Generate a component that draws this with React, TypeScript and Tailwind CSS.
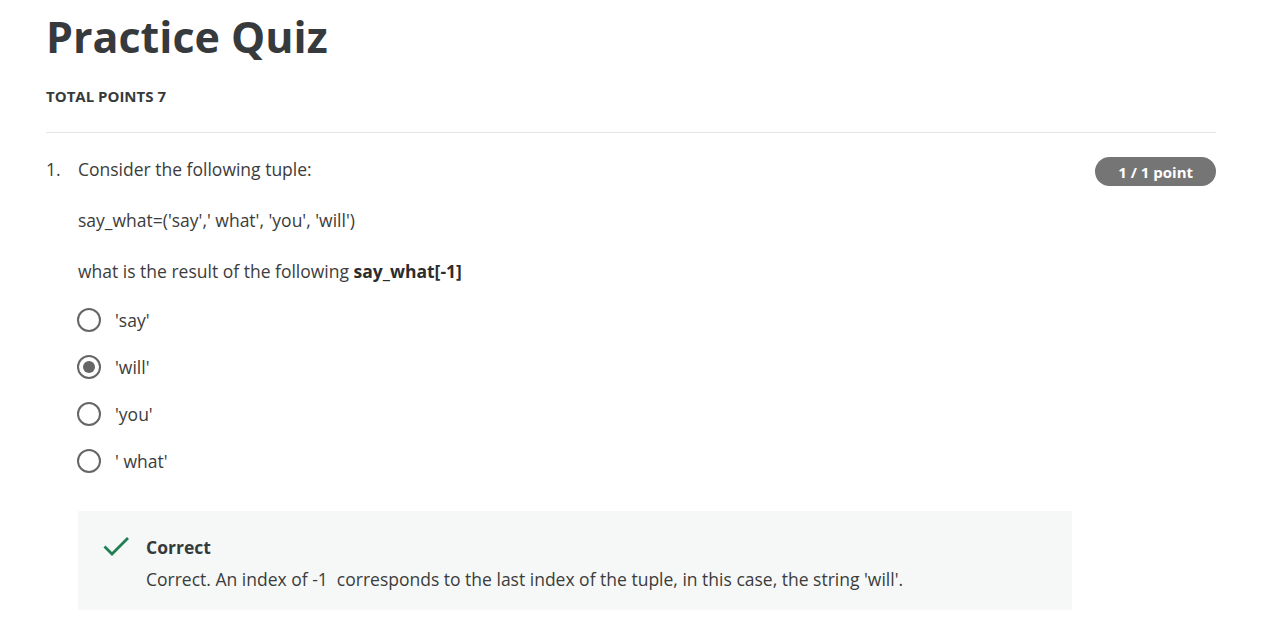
const options = ["'say'", "'will'", "'you'", "' what'"];

const Radio = ({ checked }: { checked: boolean }) => (
  <span className="ml-[-1px] flex h-6 w-6 shrink-0 items-center justify-center rounded-full border-2 border-[#666666] bg-white">
    {checked && <span className="h-3 w-3 rounded-full bg-[#666666]" />}
  </span>
);

export default function App() {
  return (
    <div
      className="min-h-[641px] bg-white px-[46px] text-[#3c3c3c]"
      style={{ fontFamily: '"Open Sans", sans-serif' }}
    >
      <h1 className="pt-[10px] text-[43px] font-bold leading-[54px] text-[#373a3c]">Practice Quiz</h1>
      <div className="mt-[22px] text-[15px] font-bold leading-5 text-[#373a3c]">TOTAL POINTS 7</div>
      <div className="mt-[26px] h-px w-[1170px] bg-[#e5e5e5]" />

      <div className="mt-[24px] flex w-[1170px] items-start">
        <span className="w-[32px] text-[17.5px] leading-6">1.</span>
        <div className="flex-1">
          <p className="text-[17.5px] leading-6">Consider the following tuple:</p>
          <p className="mt-[27px] text-[17.5px] leading-6">say_what=('say',' what', 'you', 'will')</p>
          <p className="mt-[27px] text-[17.5px] leading-6">
            what is the result of the following <b className="font-bold text-[#2d2d2d]">say_what[-1]</b>
          </p>
          <div className="mt-[25px] flex flex-col gap-[23px]">
            {options.map((o, i) => (
              <label key={o} className="flex items-center gap-[14px] text-[17.5px] leading-6">
                <Radio checked={i === 1} />
                <span>{o}</span>
              </label>
            ))}
          </div>
          <div className="mt-[38px] flex w-[994px] gap-[16px] bg-[#f5f8f7] px-[24px] pb-[19px] pt-[24px]">
            <svg width="28" height="24" viewBox="0 0 28 24" className="mt-[-1px] shrink-0">
              <path d="M2.5 12.5 L10 20 L26 4" fill="none" stroke="#1f7f52" strokeWidth="2.8" />
            </svg>
            <div>
              <div className="text-[17.5px] font-bold leading-6 text-[#373a3c]">Correct</div>
              <div className="mt-[8px] text-[17.5px] leading-6">
                Correct. An index of -1&nbsp; corresponds to the last index of the tuple, in this case, the string 'will'.
              </div>
            </div>
          </div>
        </div>
        <span className="flex h-[29px] items-center rounded-full bg-[#757575] px-[23px] text-[15px] font-bold leading-5 text-white">
          1 / 1 point
        </span>
      </div>
    </div>
  );
}
